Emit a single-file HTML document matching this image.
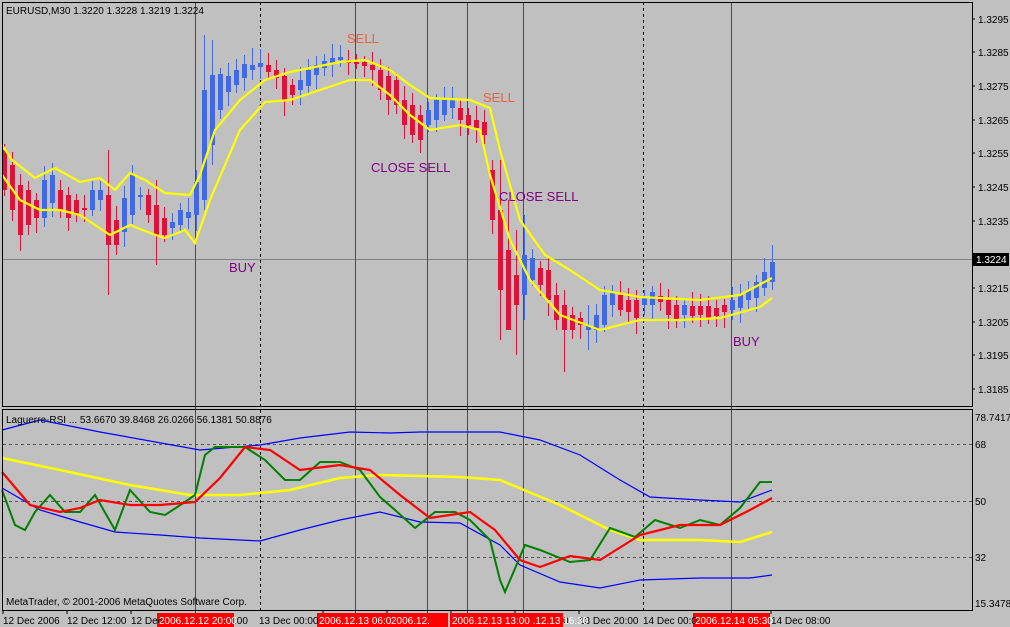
<!DOCTYPE html>
<html><head><meta charset="utf-8"><style>
body{margin:0;width:1010px;height:627px;background:#c0c0c0;overflow:hidden;font-family:"Liberation Sans",sans-serif}
svg{position:absolute;left:0;top:0}
</style></head><body>
<svg id="s" width="1010" height="627" xmlns="http://www.w3.org/2000/svg" font-family="Liberation Sans, sans-serif">
<rect width="1010" height="627" fill="#c0c0c0"/>
<g stroke="#000" stroke-dasharray="3,3" stroke-width="1">
<line x1="260.5" y1="2" x2="260.5" y2="610"/><line x1="643.5" y1="2" x2="643.5" y2="610"/>
<line x1="3" y1="444.5" x2="972" y2="444.5" stroke="#555"/>
<line x1="3" y1="501.5" x2="972" y2="501.5" stroke="#555"/>
<line x1="3" y1="557.5" x2="972" y2="557.5" stroke="#555"/>
</g>
<rect x="3" y="259" width="969" height="1" fill="#7a8290"/>
<g fill="#ff0000">
<rect x="195" y="2" width="1" height="625"/><rect x="355" y="2" width="1" height="625"/>
<rect x="427" y="2" width="1" height="625"/><rect x="467" y="2" width="1" height="625"/>
<rect x="523" y="2" width="1" height="625"/><rect x="731" y="2" width="1" height="625"/>
</g>
<g id="candles"></g>
<g fill="none" stroke="#ffff00" stroke-width="2.2">
<polyline points="2,145 12,160 35,178 55,168 80,182 100,178 115,190 130,173 145,180 165,193 190,195 200,175 215,130 240,100 265,80 290,72 340,62 365,60 390,70 410,85 430,98 470,100 490,108 500,150 520,220 545,255 570,270 600,290 640,297 700,300 740,295 772,278"/>
<polyline points="2,175 20,200 40,210 60,210 80,215 110,235 130,225 150,233 165,238 185,230 195,243 210,200 240,130 265,102 290,100 320,90 350,80 370,80 390,95 410,115 430,130 460,125 480,130 490,175 510,240 530,280 560,315 600,330 640,320 680,320 720,318 760,307 772,298"/>
</g>
<g fill="none" stroke-width="1.2">
<polyline stroke="#0000ff" points="2,430 40,420 100,432 200,450 260,445 300,438 350,432 390,433 420,432 500,432 540,440 580,455 620,480 650,497 700,500 740,502 772,490"/>
<polyline stroke="#0000ff" points="2,488 40,510 80,522 115,532 160,535 200,538 260,541 300,530 340,520 380,512 420,522 460,523 500,545 520,565 560,582 600,588 640,580 700,578 750,578 772,575"/>
</g>
<polyline fill="none" stroke="#ffff00" stroke-width="2.5" points="2,458 60,470 130,485 190,495 240,495 290,490 340,478 380,475 460,477 500,480 560,505 610,530 640,540 700,540 740,542 772,532"/>
<polyline fill="none" stroke="#008000" stroke-width="2" points="2,490 15,525 25,530 35,512 50,495 65,512 80,512 95,495 115,530 130,490 150,512 165,515 185,502 195,495 205,455 215,447 245,447 265,460 285,480 300,480 320,462 340,462 360,470 380,497 395,510 415,528 435,512 455,512 470,520 490,540 500,580 505,592 525,545 540,550 570,562 590,560 610,528 635,537 655,520 680,528 700,520 720,525 740,508 760,482 772,482"/>
<polyline fill="none" stroke="#ff0000" stroke-width="2.2" points="2,472 30,505 60,512 80,508 100,500 130,505 160,505 195,502 220,478 245,447 270,450 300,470 340,465 370,470 400,495 430,518 470,512 495,530 520,560 540,567 570,556 600,560 640,535 680,525 720,525 750,510 772,498"/>
<g fill="none" stroke="#000" stroke-width="1">
<rect x="2.5" y="2.5" width="970" height="404"/>
<rect x="2.5" y="409.5" width="970" height="201"/>
</g>
<g stroke="#000"><line x1="972" y1="19" x2="975" y2="19"/><line x1="972" y1="52" x2="975" y2="52"/><line x1="972" y1="86" x2="975" y2="86"/><line x1="972" y1="120" x2="975" y2="120"/><line x1="972" y1="153" x2="975" y2="153"/><line x1="972" y1="187" x2="975" y2="187"/><line x1="972" y1="221" x2="975" y2="221"/><line x1="972" y1="288" x2="975" y2="288"/><line x1="972" y1="322" x2="975" y2="322"/><line x1="972" y1="355" x2="975" y2="355"/><line x1="972" y1="389" x2="975" y2="389"/></g>
<g font-size="10" fill="#000">
<text x="978" y="23">1.3295</text><text x="978" y="56">1.3285</text><text x="978" y="90">1.3275</text><text x="978" y="124">1.3265</text><text x="978" y="157">1.3255</text><text x="978" y="191">1.3245</text><text x="978" y="225">1.3235</text><text x="978" y="292">1.3215</text><text x="978" y="326">1.3205</text><text x="978" y="359">1.3195</text><text x="978" y="393">1.3185</text>
<text x="975" y="421">78.7417</text><text x="975" y="448">68</text><text x="975" y="505">50</text><text x="975" y="561">32</text><text x="975" y="607">15.3478</text>
</g>
<rect x="973" y="253" width="36" height="13" fill="#000"/>
<text x="976" y="263" font-size="10" fill="#fff">1.3224</text>
<text x="6" y="14" font-size="10">EURUSD,M30  1.3220 1.3228 1.3219 1.3224</text>
<text x="6" y="423" font-size="10">Laguerre-RSI ... 53.6670 39.8468 26.0266 56.1381 50.8876</text>
<text x="6" y="605" font-size="10">MetaTrader, © 2001-2006 MetaQuotes Software Corp.</text>
<g font-size="13">
<text x="347" y="43" fill="#f06040">SELL</text><text x="483" y="102" fill="#f06040">SELL</text>
<text x="371" y="172" fill="#800080">CLOSE SELL</text><text x="499" y="201" fill="#800080">CLOSE SELL</text>
<text x="229" y="272" fill="#800080">BUY</text><text x="733" y="346" fill="#800080">BUY</text>
</g>
<g stroke="#000"><line x1="3" y1="610" x2="3" y2="614"/><line x1="67" y1="610" x2="67" y2="614"/><line x1="131" y1="610" x2="131" y2="614"/><line x1="323" y1="610" x2="323" y2="614"/><line x1="387" y1="610" x2="387" y2="614"/><line x1="451" y1="610" x2="451" y2="614"/><line x1="515" y1="610" x2="515" y2="614"/><line x1="579" y1="610" x2="579" y2="614"/><line x1="771" y1="610" x2="771" y2="614"/></g>
<g fill="#ff0000"><rect x="157" y="613" width="77" height="14"/><rect x="317" y="613" width="72" height="14"/><rect x="389" y="613" width="59" height="14"/><rect x="450" y="613" width="113" height="14"/><rect x="693" y="613" width="77" height="14"/></g>
<g font-size="10" fill="#000">
<text x="3" y="624">12 Dec 2006</text><text x="67" y="624">12 Dec 12:00</text><text x="131" y="624">12 Dec</text><text x="234" y="624">:00</text><text x="259" y="624">13 Dec 00:00</text><text x="563" y="624">0</text><text x="579" y="624">13 Dec 20:00</text><text x="643" y="624">14 Dec 00:0</text><text x="771" y="624">14 Dec 08:00</text>
</g>
<g font-size="10" fill="#fff">
<text x="159" y="624">2006.12.12 20:00</text><text x="319" y="624">2006.12.13 06:0</text><text x="391" y="624">2006.12.</text><text x="452" y="624">2006.12.13 13:00 .12.13 16:30</text><text x="695" y="624">2006.12.14 05:30</text>
</g>
</svg>
<script>
var d=[["r",150,190],["r",165,210],["r",185,235],["r",190,225],["r",200,218],["b",180,218],["b",175,203],["r",190,210],["r",195,218],["r",200,215],["r",208,210],["b",190,210],["b",190,200],["r",195,245],["r",220,245],["b",198,232],["b",175,215],["b",195,196],["r",195,215],["r",205,235],["r",218,235],["b",222,228],["b",210,225],["b",212,218],["b",182,215],["b",90,200],["b",75,145],["b",74,110],["b",76,92],["b",70,85],["b",64,78],["b",65,70],["b",63,67],["r",65,72],["r",70,78],["r",76,100],["r",85,95],["b",80,90],["b",70,86],["b",65,75],["b",61,68],["b",58,64],["b",57,60],["r",60,63],["r",62,63],["r",62,66],["r",65,70],["r",70,90],["r",76,100],["r",80,105],["r",100,125],["r",105,135],["r",115,140],["b",110,125],["b",100,120],["b",100,115],["b",98,108],["r",108,120],["r",115,125],["r",120,128],["r",122,135],["r",170,220],["r",210,290],["r",250,330],["r",275,305],["b",255,295],["b",258,280],["r",268,285],["r",270,300],["r",295,320],["r",305,330],["r",315,330],["r",318,325],["b",325,330],["b",315,330],["b",295,325],["b",292,305],["r",295,310],["r",300,312],["r",300,318],["b",298,305],["b",292,305],["r",296,302],["r",300,315],["r",305,320],["b",305,315],["r",306,316],["r",306,315],["r",306,318],["r",308,316],["r",305,312],["b",300,310],["b",295,308],["b",290,300],["b",282,298],["b",272,288],["b",262,282]];
var wk={13:[150,295],19:[180,265],25:[35,210],26:[40,165],31:[48,80],62:[160,340],63:[200,330],64:[230,355],65:[215,320],70:[290,372],73:[305,350],96:[245,290]};
var g=document.getElementById("candles"),h="";
d.forEach(function(c,i){var x=4+8*i,col=c[0]=="r"?"#dc143c":"#4169e1";var hi=c[1]-6-(i*7%9),lo=c[2]+6+(i*5%11);if(wk[i]){hi=wk[i][0];lo=wk[i][1];}
h+='<rect x="'+x+'" y="'+hi+'" width="1" height="'+(lo-hi)+'" fill="'+col+'"/>';
h+='<rect x="'+(x-2)+'" y="'+c[1]+'" width="5" height="'+Math.max(2,c[2]-c[1])+'" fill="'+col+'"/>';});
g.innerHTML=h;
</script>
</body></html>
